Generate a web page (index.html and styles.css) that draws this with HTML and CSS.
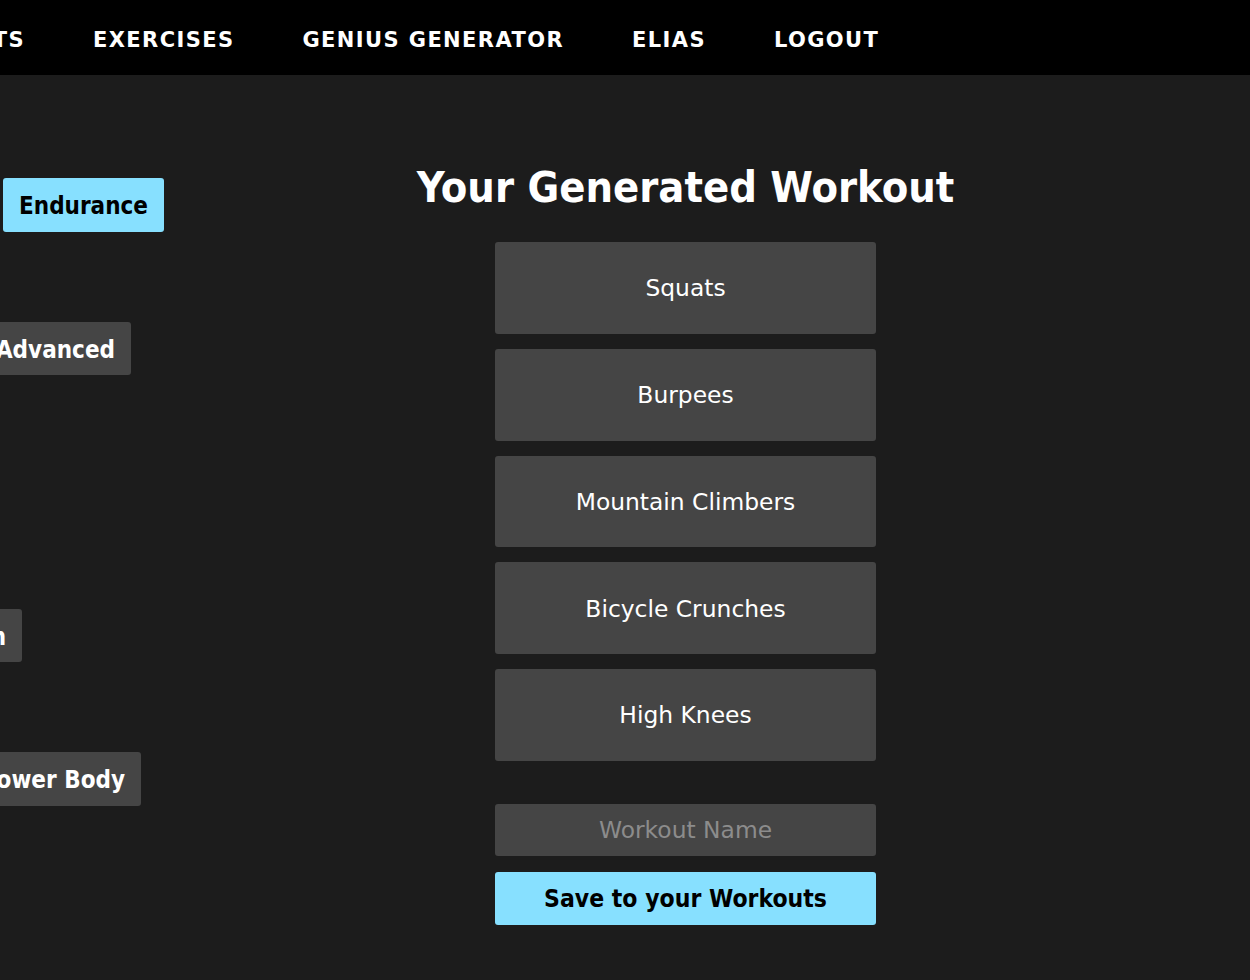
FILE: index.html
```html
<!DOCTYPE html>
<html lang="en">
<head>
<meta charset="utf-8">
<title>Genius Generator</title>
<link rel="stylesheet" href="styles.css">
</head>
<body>
<header class="nav">
  <ul class="nav-list">
    <li class="nav-lead">
      <span class="nav-item">HOME</span>
      <span class="nav-item">WORKOUTS</span>
    </li>
    <li class="nav-item">EXERCISES</li>
    <li class="nav-item">GENIUS GENERATOR</li>
    <li class="nav-item">ELIAS</li>
    <li class="nav-item">LOGOUT</li>
  </ul>
</header>
<main class="main">
  <section class="options">
    <div class="opt-row">
      <button class="opt">Strength</button>
      <button class="opt">Hypertrophy</button>
      <button class="opt opt-active">Endurance</button>
    </div>
    <div class="opt-row opt-row-2">
      <button class="opt">Beginner</button>
      <button class="opt">Intermediate</button>
      <button class="opt">Advanced</button>
    </div>
    <div class="opt-row opt-row-3">
      <button class="opt">Home</button>
      <button class="opt">Gym</button>
    </div>
    <div class="opt-row opt-row-4">
      <button class="opt">30 min</button>
      <button class="opt">45 min</button>
      <button class="opt">60 min</button>
    </div>
    <div class="opt-row opt-row-5">
      <button class="opt">Full Body</button>
      <button class="opt">Upper Body</button>
      <button class="opt">Lower Body</button>
    </div>
  </section>
  <section class="result">
    <h1 class="result-title">Your Generated Workout</h1>
    <ul class="exercise-list">
      <li class="exercise">Squats</li>
      <li class="exercise">Burpees</li>
      <li class="exercise">Mountain Climbers</li>
      <li class="exercise">Bicycle Crunches</li>
      <li class="exercise">High Knees</li>
    </ul>
    <form class="save-form">
      <input class="name-input" type="text" placeholder="Workout Name">
      <button class="save-btn" type="button">Save to your Workouts</button>
    </form>
  </section>
</main>
</body>
</html>
```
FILE: styles.css
```css
* { box-sizing: border-box; }
html, body { margin: 0; padding: 0; }
body {
  background: #1c1c1c;
  color: #fff;
  font-family: "DejaVu Sans", sans-serif;
  overflow: hidden;
  width: 1250px;
  height: 980px;
}
.nav {
  background: #000;
  height: 75px;
  padding-top: 4px;
  display: flex;
  align-items: center;
}
.nav-list {
  list-style: none;
  margin: 0;
  padding: 0;
  display: flex;
  gap: 68px;
}
.nav-lead {
  width: 500px;
  margin-left: -475px;
  display: flex;
  justify-content: flex-end;
  gap: 68px;
}
.nav-item {
  font-size: 21px;
  font-weight: 700;
  letter-spacing: 1.4px;
  white-space: nowrap;
}
.main {
  display: flex;
  align-items: flex-start;
}
.options {
  flex: 0 0 700px;
  width: 700px;
  margin-left: -536px;
  padding-top: 103px;
  display: flex;
  flex-direction: column;
  gap: 90px;
}
.opt-row {
  display: flex;
  justify-content: flex-end;
  gap: 16px;
}
.opt-row-2 { margin-right: 33px; }
.opt-row-3 { margin-right: 230px; }
.opt-row-4 { margin-right: 142px; }
.opt-row-5 { margin-right: 23px; }
.opt {
  font-family: "DejaVu Sans Condensed", "DejaVu Sans", sans-serif;
  font-stretch: 87.5%;
  font-size: 24px;
  font-weight: 700;
  height: 53.5px;
  padding: 3px 16px 0;
  border: none;
  border-radius: 3px;
  background: #454545;
  color: #fff;
  white-space: nowrap;
}
.opt-active {
  background: #87e0ff;
  color: #000;
}
.result {
  flex: 1;
  padding-right: 43px;
  display: flex;
  flex-direction: column;
  align-items: center;
}
.result-title {
  margin: 86px 0 0;
  font-family: "DejaVu Sans Condensed", "DejaVu Sans", sans-serif;
  font-stretch: 87.5%;
  font-size: 43px;
  line-height: 52px;
  font-weight: 700;
}
.exercise-list {
  list-style: none;
  margin: 29px 0 0;
  padding: 0;
  display: flex;
  flex-direction: column;
  gap: 15px;
}
.exercise {
  width: 381px;
  height: 91.75px;
  background: #454545;
  border-radius: 3px;
  display: flex;
  align-items: center;
  justify-content: center;
  padding-top: 1px;
  font-size: 23.4px;
  font-weight: 400;
}
.save-form {
  margin-top: 43px;
  display: flex;
  flex-direction: column;
  gap: 16px;
}
.name-input {
  width: 381px;
  height: 52px;
  border: none;
  border-radius: 3px;
  background: #454545;
  color: #fff;
  font-family: inherit;
  font-size: 23.4px;
  text-align: center;
  outline: none;
}
.name-input::placeholder { color: #8c8c8c; }
.save-btn {
  width: 381px;
  height: 53px;
  border: none;
  border-radius: 3px;
  background: #87e0ff;
  color: #000;
  font-family: "DejaVu Sans Condensed", "DejaVu Sans", sans-serif;
  font-stretch: 87.5%;
  font-size: 24.5px;
  font-weight: 700;
}
```
